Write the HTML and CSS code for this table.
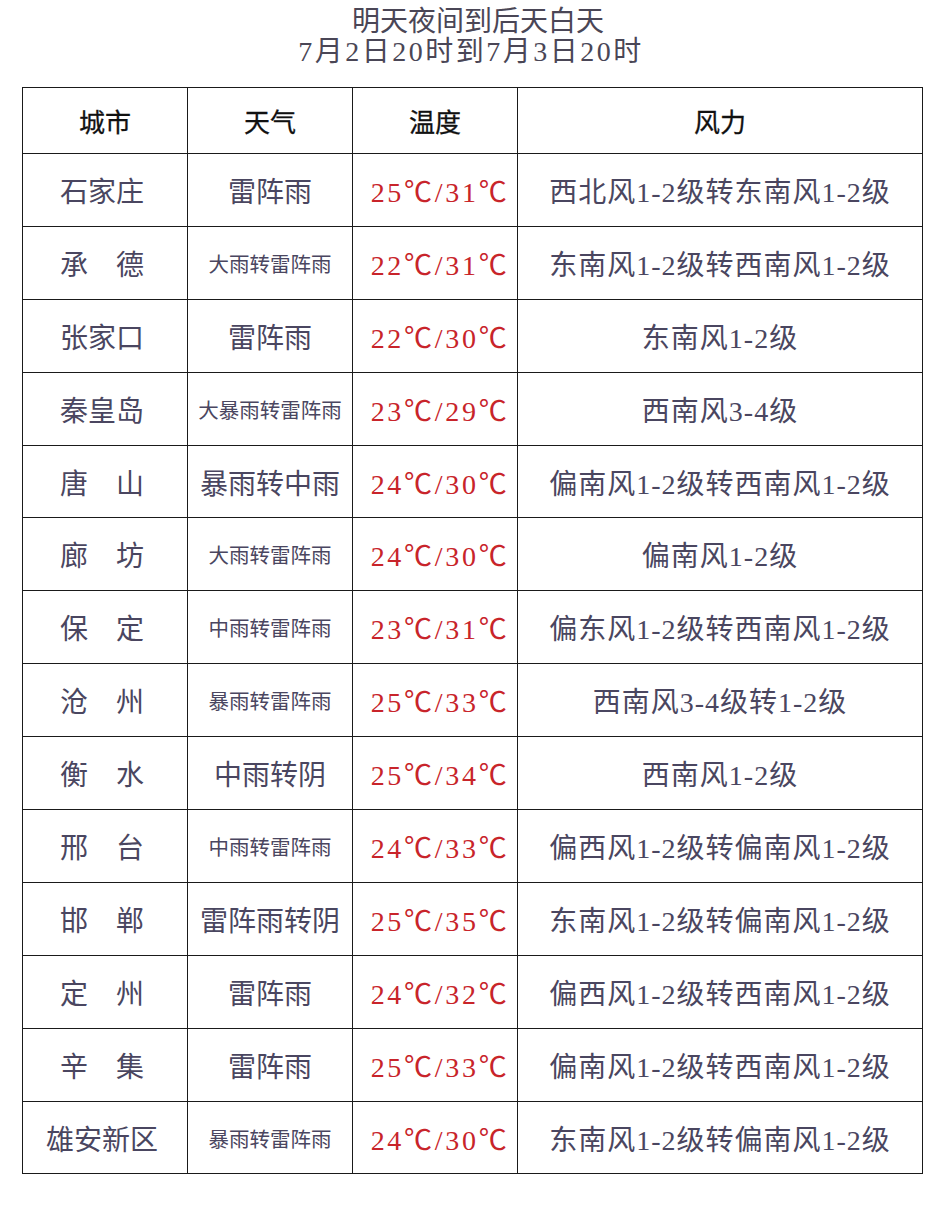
FILE: index.html
```html
<!DOCTYPE html>
<html lang="zh">
<head>
<meta charset="utf-8">
<link rel="stylesheet" href="styles.css">
</head>
<body>
<div class="title">
  <div class="t1">明天夜间到后天白天</div>
  <div class="t2">7月2日20时到7月3日20时</div>
</div>
<table class="forecast">
  <colgroup><col class="c1"><col class="c2"><col class="c3"><col class="c4"></colgroup>
  <thead>
    <tr><th>城市</th><th>天气</th><th>温度</th><th>风力</th></tr>
  </thead>
  <tbody>
    <tr><td class="city">石家庄</td><td>雷阵雨</td><td class="temp">25℃/31℃</td><td class="wind">西北风1-2级转东南风1-2级</td></tr>
    <tr><td class="city">承　德</td><td class="sm">大雨转雷阵雨</td><td class="temp">22℃/31℃</td><td class="wind">东南风1-2级转西南风1-2级</td></tr>
    <tr><td class="city">张家口</td><td>雷阵雨</td><td class="temp">22℃/30℃</td><td class="wind">东南风1-2级</td></tr>
    <tr><td class="city">秦皇岛</td><td class="sm">大暴雨转雷阵雨</td><td class="temp">23℃/29℃</td><td class="wind">西南风3-4级</td></tr>
    <tr><td class="city">唐　山</td><td>暴雨转中雨</td><td class="temp">24℃/30℃</td><td class="wind">偏南风1-2级转西南风1-2级</td></tr>
    <tr><td class="city">廊　坊</td><td class="sm">大雨转雷阵雨</td><td class="temp">24℃/30℃</td><td class="wind">偏南风1-2级</td></tr>
    <tr><td class="city">保　定</td><td class="sm">中雨转雷阵雨</td><td class="temp">23℃/31℃</td><td class="wind">偏东风1-2级转西南风1-2级</td></tr>
    <tr><td class="city">沧　州</td><td class="sm">暴雨转雷阵雨</td><td class="temp">25℃/33℃</td><td class="wind">西南风3-4级转1-2级</td></tr>
    <tr><td class="city">衡　水</td><td>中雨转阴</td><td class="temp">25℃/34℃</td><td class="wind">西南风1-2级</td></tr>
    <tr><td class="city">邢　台</td><td class="sm">中雨转雷阵雨</td><td class="temp">24℃/33℃</td><td class="wind">偏西风1-2级转偏南风1-2级</td></tr>
    <tr><td class="city">邯　郸</td><td>雷阵雨转阴</td><td class="temp">25℃/35℃</td><td class="wind">东南风1-2级转偏南风1-2级</td></tr>
    <tr><td class="city">定　州</td><td>雷阵雨</td><td class="temp">24℃/32℃</td><td class="wind">偏西风1-2级转西南风1-2级</td></tr>
    <tr><td class="city">辛　集</td><td>雷阵雨</td><td class="temp">25℃/33℃</td><td class="wind">偏南风1-2级转西南风1-2级</td></tr>
    <tr><td class="city">雄安新区</td><td class="sm">暴雨转雷阵雨</td><td class="temp">24℃/30℃</td><td class="wind">东南风1-2级转偏南风1-2级</td></tr>
  </tbody>
</table>
</body>
</html>
```
FILE: styles.css
```css
html, body {
  margin: 0;
  padding: 0;
  background: #ffffff;
}
body {
  font-family: "Liberation Serif", "Noto Sans CJK SC", serif;
  color: #4a4660;
}
.title {
  text-align: center;
  font-size: 28px;
  line-height: 30px;
  padding-top: 7px;
  height: 87px;
  box-sizing: border-box;
  color: #4a4656;
}
.t1 {
  padding-left: 14px;
}
.t2 {
  letter-spacing: 2.5px;
}
.forecast {
  margin-left: 22px;
  width: 900px;
  border-collapse: collapse;
  table-layout: fixed;
}
.c1, .c2, .c3 { width: 165px; }
.c4 { width: 405px; }
.forecast th, .forecast td {
  border: 1.5px solid #1a1a1a;
  text-align: center;
  vertical-align: middle;
  padding: 0;
  white-space: nowrap;
}
.forecast th {
  height: 65px;
  font-size: 26px;
  font-weight: normal;
  color: #111111;
  -webkit-text-stroke: 0.3px #111111;
}
.forecast td {
  height: 71.9px;
  font-size: 28px;
}
.forecast td.city {
  padding-right: 6px;
}
.forecast td.sm {
  font-size: 20.5px;
}
.forecast td.temp {
  color: #c8242a;
  font-size: 28px;
  letter-spacing: 2.7px;
  padding-left: 10px;
}
.forecast td.wind {
  letter-spacing: 1px;
}
```
